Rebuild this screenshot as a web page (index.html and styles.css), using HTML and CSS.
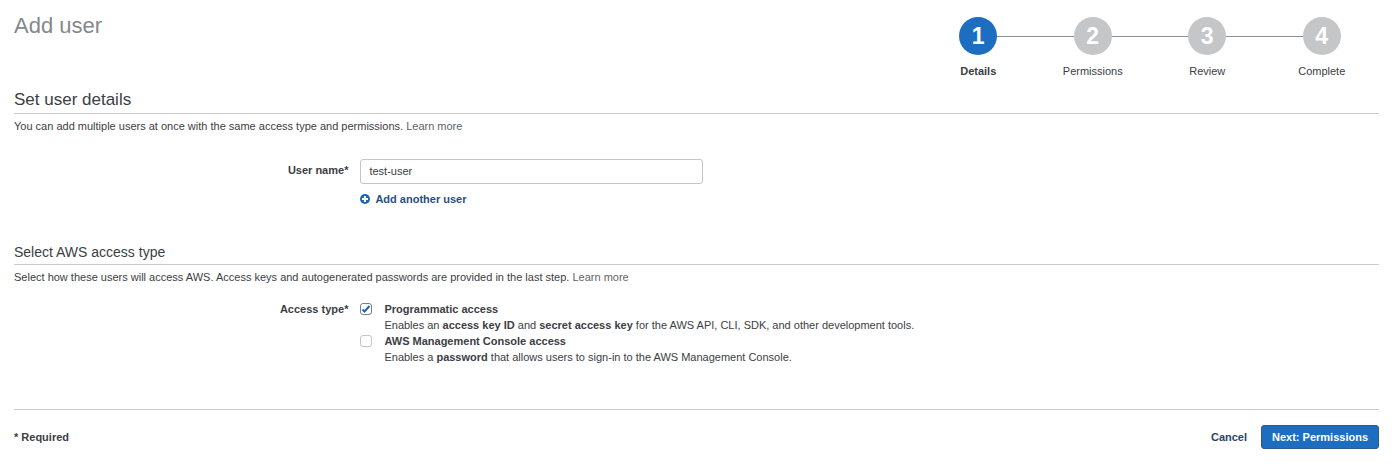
FILE: index.html
```html
<!DOCTYPE html>
<html lang="en">
<head>
<meta charset="utf-8">
<meta name="viewport" content="width=device-width, initial-scale=1">
<title>Add user</title>
<link rel="stylesheet" href="styles.css">
</head>
<body>
<main class="page">
  <header class="page-header">
    <h1 class="page-title">Add user</h1>
    <ol class="steps">
      <li class="step step-active" aria-current="step"><span class="step-track"><span class="step-number">1</span></span><span class="step-label">Details</span></li>
      <li class="step"><span class="step-track"><span class="step-number">2</span></span><span class="step-label">Permissions</span></li>
      <li class="step"><span class="step-track"><span class="step-number">3</span></span><span class="step-label">Review</span></li>
      <li class="step"><span class="step-track"><span class="step-number">4</span></span><span class="step-label">Complete</span></li>
    </ol>
  </header>
  <form class="user-form">
    <section class="section">
      <h2 class="section-title section-title-large">Set user details</h2>
      <p class="section-text">You can add multiple users at once with the same access type and permissions. <a class="learn-more" href="#">Learn more</a></p>
      <div class="field">
        <label class="field-label field-label-input" for="user-name">User name*</label>
        <div class="field-body">
          <input class="text-input" id="user-name" type="text" value="test-user">
          <button class="add-user" type="button">
            <svg class="add-icon" viewBox="0 0 10 10" aria-hidden="true"><circle cx="5" cy="5" r="5" fill="#1b66b8"/><path d="M5 2v6M2 5h6" stroke="#fff" stroke-width="2"/></svg>
            Add another user
          </button>
        </div>
      </div>
    </section>
    <section class="section section-access">
      <h2 class="section-title">Select AWS access type</h2>
      <p class="section-text">Select how these users will access AWS. Access keys and autogenerated passwords are provided in the last step. <a class="learn-more" href="#">Learn more</a></p>
      <div class="field" role="group" aria-labelledby="access-label">
        <span class="field-label" id="access-label">Access type*</span>
        <div class="field-body">
          <div class="option">
            <input class="checkbox" id="programmatic" type="checkbox" checked>
            <label for="programmatic"><strong>Programmatic access</strong><br>Enables an <strong>access key ID</strong> and <strong>secret access key</strong> for the AWS API, CLI, SDK, and other development tools.</label>
          </div>
          <div class="option">
            <input class="checkbox" id="console" type="checkbox">
            <label for="console"><strong>AWS Management Console access</strong><br>Enables a <strong>password</strong> that allows users to sign-in to the AWS Management Console.</label>
          </div>
        </div>
      </div>
    </section>
    <footer class="form-footer">
      <span class="required">* Required</span>
      <button class="button button-link" type="button">Cancel</button>
      <button class="button button-primary" type="submit">Next: Permissions</button>
    </footer>
  </form>
</main>
</body>
</html>
```

FILE: styles.css
```css
* {
  box-sizing: border-box;
}

body {
  margin: 0;
  background: #fff;
  color: #3b3e43;
  font: 11px/16px "Liberation Sans", Arial, sans-serif;
}

button,
input {
  font: inherit;
}

h1,
h2,
p {
  margin: 0;
  font-weight: normal;
}

.page {
  padding: 12px 21px 24px 14px;
}

.page-header {
  display: flex;
  justify-content: space-between;
  align-items: flex-start;
}

.page-title {
  color: #85878b;
  font-size: 22px;
  line-height: 28px;
}

.steps {
  display: grid;
  grid-template-columns: repeat(4, 1fr);
  width: 458px;
  margin: 0;
  padding: 5px 0 0;
  list-style: none;
}

.step {
  display: flex;
  flex-direction: column;
  align-items: center;
  gap: 8px;
}

.step-track {
  display: flex;
  align-items: center;
  align-self: stretch;
}

.step-track::before,
.step-track::after {
  content: "";
  flex: 1;
  height: 1px;
  background: #8b8d97;
}

.step:first-child .step-track::before,
.step:last-child .step-track::after {
  background: transparent;
}

.step-number {
  width: 38px;
  height: 38px;
  border-radius: 50%;
  background: #c5c6c8;
  color: #fff;
  font-size: 23px;
  font-weight: bold;
  line-height: 38px;
  text-align: center;
}

.step-active .step-number {
  background: #1d6dc1;
}

.step-active .step-label {
  font-weight: bold;
}

.section-title {
  padding-bottom: 4px;
  border-bottom: 1px solid #c9cccc;
  font-size: 14px;
  line-height: 16px;
}

.section-title-large {
  margin-top: 10px;
  padding-bottom: 2px;
  font-size: 17px;
  line-height: 22px;
}

.section-text {
  margin-top: 4px;
}

.learn-more {
  color: #606368;
  text-decoration: none;
}

.section-access {
  margin-top: 37px;
}

.field {
  display: grid;
  grid-template-columns: 24.5% 1fr;
  gap: 12px;
  margin-top: 16px;
}

.field-label {
  font-weight: bold;
  text-align: right;
}

.field-label-input {
  padding-top: 3px;
}

.section:first-child .field {
  margin-top: 25px;
}

.text-input {
  display: block;
  width: 100%;
  max-width: 343px;
  height: 25px;
  padding: 0 8px 1px;
  border: 1px solid #c3c5c6;
  border-radius: 3px;
  background: #fff;
  color: inherit;
}

.add-user {
  display: flex;
  align-items: center;
  gap: 5px;
  margin-top: 7px;
  padding: 0;
  border: 0;
  background: none;
  color: #274f87;
  font-weight: bold;
}

.add-icon {
  width: 10px;
  height: 10px;
}

.option {
  display: flex;
  gap: 12px;
}

.checkbox {
  appearance: none;
  flex: none;
  width: 12px;
  height: 12px;
  margin: 2px 0;
  border: 1px solid #c3c5c6;
  border-radius: 3px;
  background: #fff;
}

.checkbox:checked {
  border-color: #777f89;
  background: #fff url("data:image/svg+xml,%3Csvg xmlns='http://www.w3.org/2000/svg' viewBox='0 0 10 10'%3E%3Cpath d='M1.5 5.5l2 2L8.5 2' fill='none' stroke='%231b66b8' stroke-width='2'/%3E%3C/svg%3E");
}

.form-footer {
  display: flex;
  align-items: center;
  gap: 14px;
  margin-top: 44px;
  padding-top: 15px;
  border-top: 1px solid #c9cccc;
}

.required {
  margin-right: auto;
  font-weight: bold;
}

.button {
  padding: 0;
  border: 0;
  background: none;
  font-weight: bold;
}

.button-link {
  color: #2b4368;
}

.button-primary {
  padding: 3px 10px;
  border: 1px solid #315b8c;
  border-radius: 3px;
  background: #1d6dc1;
  color: #fff;
}
```
